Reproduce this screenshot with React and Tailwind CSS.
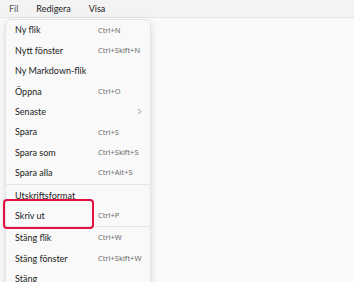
export default function App() {
  const items = [
    { label: "Ny flik", key: "Ctrl+N" },
    { label: "Nytt fönster", key: "Ctrl+Skift+N" },
    { label: "Ny Markdown-flik" },
    { label: "Öppna", key: "Ctrl+O" },
    { label: "Senaste", sub: true },
    { label: "Spara", key: "Ctrl+S" },
    { label: "Spara som", key: "Ctrl+Skift+S" },
    { label: "Spara alla", key: "Ctrl+Alt+S" },
    { sep: true },
    { label: "Utskriftsformat" },
    { label: "Skriv ut", key: "Ctrl+P", marked: true },
    { sep: true },
    { label: "Stäng flik", key: "Ctrl+W" },
    { label: "Stäng fönster", key: "Ctrl+Skift+W" },
    { label: "Stäng" },
  ]

  return (
    <div className="w-[354px] h-[282px] overflow-hidden bg-[#fafafa] text-[#1b1b1b] flex flex-col" style={{ fontFamily: 'Lato, "Noto Sans", sans-serif' }}>
      {/* menyrad */}
      <div className="h-[18px] shrink-0 bg-[#f3f3f3] border-b border-[#e5e5e5] flex items-center text-[9px] px-[4px]">
        <span className="px-[5px] text-[#555]">Fil</span>
        <span className="ml-[8px] px-[5px]">Redigera</span>
        <span className="ml-[8px] px-[5px]">Visa</span>
      </div>

      <div className="flex-1 relative">
        {/* Fil-menyn */}
        <div className="absolute left-[5px] top-[1px] w-[146px] h-[300px] bg-[#f9f9f9] border border-[#e4e4e4] rounded-[6px] shadow-[0_3px_8px_rgba(0,0,0,0.12)]">
          {items.map((it, i) =>
            it.sep ? (
              <div key={i} className="h-[2px] flex items-center">
                <div className="w-full h-px bg-[#e6e6e6]" />
              </div>
            ) : (
              <div key={i} className="relative h-[20.4px] flex items-center pl-[9px] pr-[10px]">
                <span className="text-[9px] flex-1 whitespace-nowrap">{it.label}</span>
                {it.key && (
                  <span className="absolute left-[92px] text-[7.5px] text-[#6b6b6b] whitespace-nowrap" style={{ fontFamily: '"Noto Sans", sans-serif' }}>{it.key}</span>
                )}
                {it.sub && (
                  <svg className="absolute left-[130px]" width="7" height="7" viewBox="0 0 8 8" fill="none" stroke="#777" strokeWidth="0.9">
                    <path d="M2.5 1 L5.5 4 L2.5 7" />
                  </svg>
                )}
                {it.marked && (
                  <div className="absolute left-[-3px] top-[-7px] w-[91px] h-[30px] border-[2.5px] border-[#e0123f] rounded-[4px]" />
                )}
              </div>
            )
          )}
        </div>
      </div>
    </div>
  )
}
